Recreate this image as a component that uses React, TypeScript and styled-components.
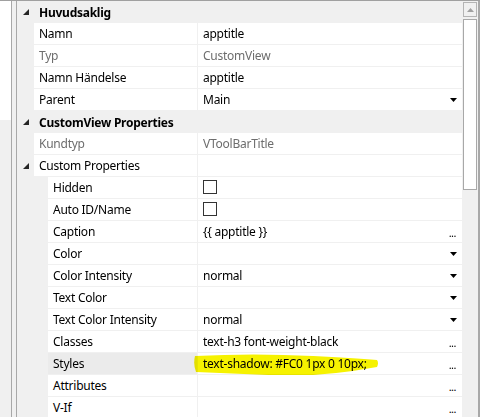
import React from "react";
import styled, { createGlobalStyle } from "styled-components";

const GlobalStyle = createGlobalStyle`
  html, body {
    margin: 0;
    padding: 0;
    background: #ffffff;
  }
  body {
    font-family: "Noto Sans", "Open Sans", sans-serif;
    font-size: 12px;
    letter-spacing: -0.25px;
    color: #000;
  }
`;

const Window = styled.div`
  display: flex;
  width: 480px;
  height: 417px;
  overflow: hidden;
  border-top: 1px solid #a0a0a0;
  box-sizing: border-box;
`;

const SidePane = styled.div`
  display: flex;
  flex-direction: column;
  width: 11px;
  border-right: 1px solid #a8a8a8;
`;

const SideTop = styled.div`
  height: 119px;
  background: #ffffff;
`;

const SideBottom = styled.div`
  flex: 1;
  background: #f0f0f0;
`;

const Splitter = styled.div`
  width: 4px;
  background: #f0f0f0;
  border-right: 1px solid #a8a8a8;
`;

const Grid = styled.div`
  position: relative;
  flex: 1;
  display: flex;
  flex-direction: column;
  background: #f0f0f0;
`;

const Row = styled.div<{ $header?: boolean }>`
  position: relative;
  display: flex;
  height: 22px;
  flex: 0 0 22px;
  box-sizing: border-box;
  background: #f0f0f0;
  font-weight: ${({ $header }) => ($header ? 700 : 400)};
`;

const Margin = styled.div<{ $w: number }>`
  display: flex;
  align-items: center;
  justify-content: center;
  width: ${({ $w }) => $w}px;
  flex: 0 0 ${({ $w }) => $w}px;
`;

const NameCell = styled.div<{ $w: number; $selected?: boolean }>`
  display: flex;
  align-items: center;
  box-sizing: border-box;
  width: ${({ $w }) => $w}px;
  flex: 0 0 ${({ $w }) => $w}px;
  padding-left: 5px;
  background: ${({ $selected }) => ($selected ? "#ebebeb" : "#ffffff")};
  border-right: 1px solid #f0f0f0;
  border-bottom: 1px solid #f0f0f0;
  white-space: nowrap;
`;

const ValueCell = styled.div<{ $dim?: boolean }>`
  position: relative;
  display: flex;
  align-items: center;
  flex: 1;
  padding: 0 5px;
  background: #ffffff;
  border-bottom: 1px solid #f0f0f0;
  white-space: nowrap;
  color: ${({ $dim }) => ($dim ? "#6d6d6d" : "#000")};
`;

const HeaderTitle = styled.div`
  display: flex;
  align-items: center;
  padding-left: 5px;
  white-space: nowrap;
`;

const ValueText = styled.span`
  position: relative;
  flex: 1;
`;

const Dim = styled.span`
  color: #6d6d6d;
`;

const CheckBox = styled.span`
  display: inline-block;
  width: 12px;
  height: 12px;
  margin-top: 2px;
  border: 1px solid #333333;
  background: #fff;
`;

const Ellipsis = styled.span`
  font-size: 11px;
  letter-spacing: -0.5px;
  margin-right: 1px;
  line-height: 1;
  margin-top: 2px;
`;

const Highlight = styled.svg`
  position: absolute;
  left: 176px;
  top: 0;
  width: 186px;
  height: 24px;
  mix-blend-mode: multiply;
  pointer-events: none;
`;

const ScrollBar = styled.div`
  display: flex;
  flex-direction: column;
  align-items: center;
  width: 16px;
  flex: 0 0 16px;
  background: #f0f0f0;
  border-right: 2px solid #a8a8a8;
  padding-top: 1px;
  gap: 2px;
`;

const ScrollButton = styled.div`
  display: flex;
  align-items: center;
  justify-content: center;
  box-sizing: border-box;
  width: 14px;
  height: 15px;
  border: 1px solid #b4b4b4;
  background: #f0f0f0;
`;

const Thumb = styled.div`
  box-sizing: border-box;
  width: 14px;
  height: 171px;
  border: 1px solid #a8a8a8;
  background: #ffffff;
`;

const Expander = () => (
  <svg width="6" height="6" viewBox="0 0 6 6">
    <polygon points="6,0 6,6 0,6" fill="#262626" />
  </svg>
);

const DropArrow = () => (
  <svg width="7" height="4" viewBox="0 0 7 4">
    <polygon points="0,0 7,0 3.5,4" fill="#000" />
  </svg>
);

type Prop = {
  name: string;
  value?: React.ReactNode;
  dim?: boolean;
  level?: number;
  kind?: "drop" | "dots" | "check";
  selected?: boolean;
  expander?: boolean;
  marker?: boolean;
};

type Item = { header: string } | Prop;

const items: Item[] = [
  { header: "Huvudsaklig" },
  { name: "Namn", value: "apptitle" },
  { name: "Typ", value: "CustomView", dim: true },
  { name: "Namn Händelse", value: "apptitle" },
  { name: "Parent", value: "Main", kind: "drop" },
  { header: "CustomView Properties" },
  { name: "Kundtyp", value: "VToolBarTitle", dim: true },
  { name: "Custom Properties", expander: true },
  { name: "Hidden", level: 1, kind: "check" },
  { name: "Auto ID/Name", level: 1, kind: "check" },
  { name: "Caption", value: "{{ apptitle }}", level: 1, kind: "dots" },
  { name: "Color", level: 1, kind: "drop" },
  { name: "Color Intensity", value: "normal", level: 1, kind: "drop" },
  { name: "Text Color", level: 1, kind: "drop" },
  { name: "Text Color Intensity", value: "normal", level: 1, kind: "drop" },
  { name: "Classes", value: "text-h3 font-weight-black", level: 1, kind: "dots" },
  {
    name: "Styles",
    value: "text-shadow: #FC0 1px 0 10px;",
    level: 1,
    kind: "dots",
    selected: true,
    marker: true,
  },
  { name: "Attributes", level: 1, kind: "dots" },
  { name: "V-If", level: 1, kind: "dots" },
];

const NAME_SPAN = 181;

const PropertyRow = ({ p }: { p: Prop }) => {
  const margin = p.level ? 31 : 17;
  return (
    <Row>
      <Margin $w={margin}>{p.expander && <Expander />}</Margin>
      <NameCell $w={NAME_SPAN - margin} $selected={p.selected}>
        {p.dim ? <Dim>{p.name}</Dim> : p.name}
      </NameCell>
      <ValueCell $dim={p.dim}>
        <ValueText>{p.kind === "check" ? <CheckBox /> : p.value}</ValueText>
        {p.kind === "drop" && <DropArrow />}
        {p.kind === "dots" && <Ellipsis>...</Ellipsis>}
      </ValueCell>
      {p.marker && (
        <Highlight viewBox="0 0 186 24">
          <path
            d="M2,3 Q60,0 120,3 Q160,5 184,7 Q186,10 184,14 Q140,22 100,23 Q50,21 3,19 Q0,11 2,3 Z"
            fill="#f6f200"
          />
        </Highlight>
      )}
    </Row>
  );
};

const HeaderRow = ({ title }: { title: string }) => (
  <Row $header>
    <Margin $w={17}>
      <Expander />
    </Margin>
    <HeaderTitle>{title}</HeaderTitle>
  </Row>
);

export default function App() {
  return (
    <>
      <GlobalStyle />
      <Window>
        <SidePane>
          <SideTop />
          <SideBottom />
        </SidePane>
        <Splitter />
        <Grid>
          {items.map((it, i) =>
            "header" in it ? (
              <HeaderRow key={i} title={it.header} />
            ) : (
              <PropertyRow key={i} p={it} />
            )
          )}
        </Grid>
        <ScrollBar>
          <ScrollButton>
            <svg width="7" height="4" viewBox="0 0 7 4">
              <polygon points="3.5,0 7,4 0,4" fill="#a0a0a0" />
            </svg>
          </ScrollButton>
          <Thumb />
        </ScrollBar>
      </Window>
    </>
  );
}
